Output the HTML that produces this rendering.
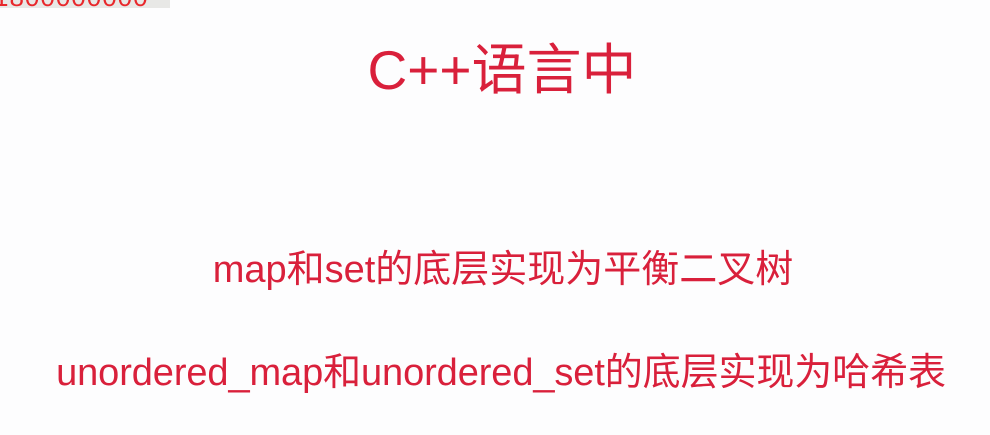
<!DOCTYPE html>
<html><head><meta charset="utf-8"><style>
html,body{margin:0;padding:0;width:990px;height:435px;background:#fdfdfe;overflow:hidden;position:relative;font-family:"Liberation Sans","Noto Sans CJK SC",sans-serif;color:#d9203b}
.t{position:absolute;left:0;width:990px;text-align:center;white-space:nowrap;line-height:1}
.bar{position:absolute;left:0;top:0;width:170px;height:8px;background:#e8e8e6;overflow:hidden}
.bar span{position:absolute;left:-6px;top:-18px;font-size:26px;color:#e8282c;letter-spacing:1px}
</style></head><body>
<div class="bar"><span>1800000000</span></div>
<div class="t" style="top:43px;left:7px;font-size:55px">C++语言中</div>
<div class="t" style="top:251px;left:8px;font-size:38px">map和set的底层实现为平衡二叉树</div>
<div class="t" style="top:354px;left:6px;font-size:38px;letter-spacing:-0.1px">unordered_map和unordered_set的底层实现为哈希表</div>
</body></html>
